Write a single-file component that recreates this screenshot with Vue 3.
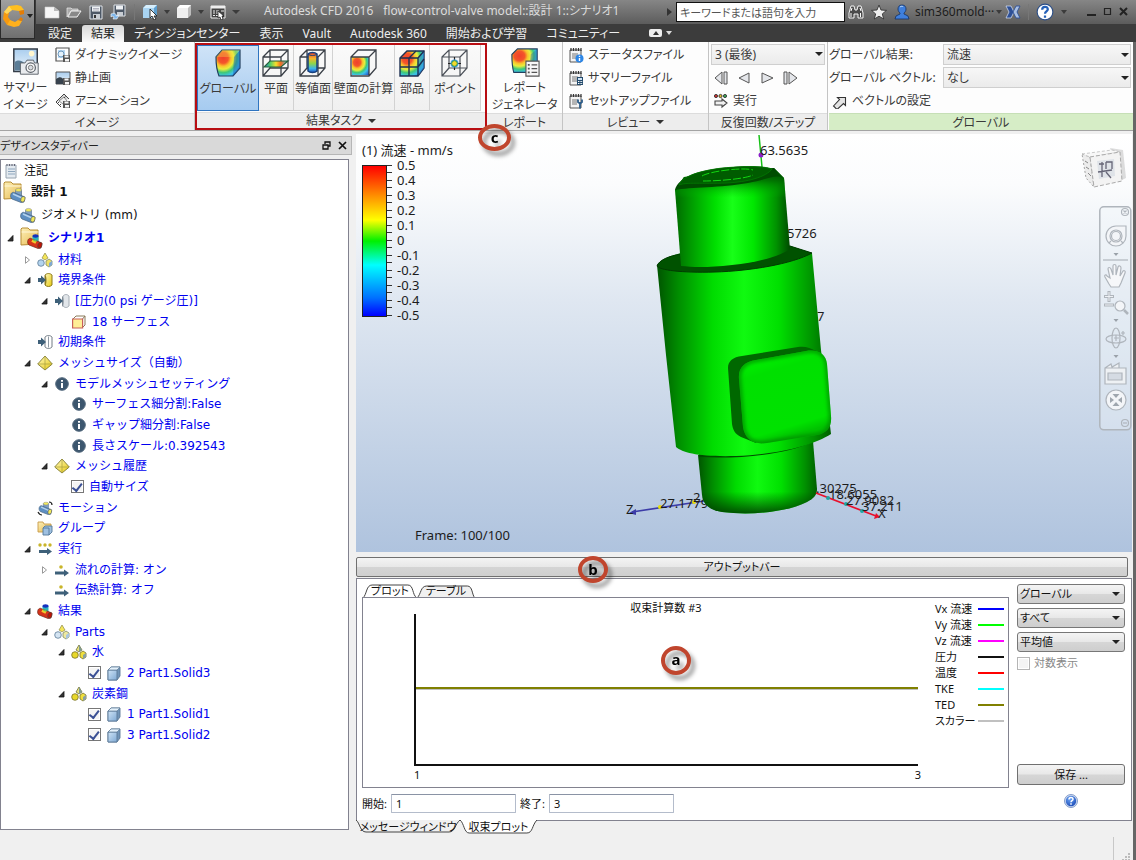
<script setup>
import { ref } from 'vue'

const menuTabs = ['設定', '結果', 'ディシジョンセンター', '表示', 'Vault', 'Autodesk 360', '開始および学習', 'コミュニティー']
const activeTab = ref('結果')

const imageTools = [
  { icon: 'dyn', label: 'ダイナミックイメージ' },
  { icon: 'still', label: '静止画' },
  { icon: 'anim', label: 'アニメーション' },
]
const resultTools = [
  { icon: 'gcube', label: 'グローバル', cls: 'w62', active: true },
  { icon: 'plane', label: '平面', cls: 'w35' },
  { icon: 'iso', label: '等値面', cls: 'w39' },
  { icon: 'wall', label: '壁面の計算', cls: 'w62' },
  { icon: 'parts', label: '部品', cls: 'w35' },
  { icon: 'point', label: 'ポイント', cls: 'w50' },
]
const reviewTools = [
  { icon: 'rstat', label: 'ステータスファイル' },
  { icon: 'rsum', label: 'サマリーファイル' },
  { icon: 'rset', label: 'セットアップファイル' },
]

const tree = [
  { lv: 0, icon: 'note', label: '注記', cls: 'black', noArrow: true },
  { lv: 0, icon: 'fgeo', label: '設計 1', cls: 'black bold', big: true, noArrow: true },
  { lv: 1, icon: 'geo', label: 'ジオメトリ (mm)', cls: 'black' },
  { lv: 1, arrow: 'open', icon: 'fscn', label: 'シナリオ1', cls: 'bold', big: true },
  { lv: 2, arrow: 'closed', icon: 'mat', label: '材料' },
  { lv: 2, arrow: 'open', icon: 'bc', label: '境界条件' },
  { lv: 3, arrow: 'open', icon: 'bcg', label: '[圧力(0 psi ゲージ圧)]' },
  { lv: 4, icon: 'surf', label: '18 サーフェス' },
  { lv: 2, icon: 'init', label: '初期条件' },
  { lv: 2, arrow: 'open', icon: 'mesh', label: 'メッシュサイズ（自動）' },
  { lv: 3, arrow: 'open', icon: 'info', label: 'モデルメッシュセッティング' },
  { lv: 4, icon: 'info', label: 'サーフェス細分割:False' },
  { lv: 4, icon: 'info', label: 'ギャップ細分割:False' },
  { lv: 4, icon: 'info', label: '長さスケール:0.392543' },
  { lv: 3, arrow: 'open', icon: 'mesh', label: 'メッシュ履歴' },
  { lv: 4, check: true, label: '自動サイズ' },
  { lv: 2, icon: 'motion', label: 'モーション' },
  { lv: 2, icon: 'group', label: 'グループ' },
  { lv: 2, arrow: 'open', icon: 'run3', label: '実行' },
  { lv: 3, arrow: 'closed', icon: 'run1', label: '流れの計算: オン' },
  { lv: 3, icon: 'run1', label: '伝熱計算: オフ' },
  { lv: 2, arrow: 'open', icon: 'res', label: '結果' },
  { lv: 3, arrow: 'open', icon: 'matw', label: 'Parts' },
  { lv: 4, arrow: 'open', icon: 'maty', label: '水' },
  { lv: 5, check: true, icon: 'solid', label: '2 Part1.Solid3' },
  { lv: 4, arrow: 'open', icon: 'maty', label: '炭素鋼' },
  { lv: 5, check: true, icon: 'solid', label: '1 Part1.Solid1' },
  { lv: 5, check: true, icon: 'solid', label: '3 Part1.Solid2' },
]
const indent = (r) => ({ paddingLeft: (r.noArrow ? 2 : 6 + 17 * (r.lv - 1)) + 'px' })

const scale = ['0.5', '0.4', '0.3', '0.2', '0.1', '0', '-0.1', '-0.2', '-0.3', '-0.4', '-0.5']

const series = [
  { label: 'Vx 流速', color: '#0000ff' },
  { label: 'Vy 流速', color: '#00ff00' },
  { label: 'Vz 流速', color: '#ff00ff' },
  { label: '圧力', color: '#111111' },
  { label: '温度', color: '#ff0000' },
  { label: 'TKE', color: '#00ffff' },
  { label: 'TED', color: '#808000' },
  { label: 'スカラー', color: '#c0c0c0' },
]
const start = ref('1')
const end = ref('3')
</script>

<template>
  <div class="app">
    <svg class="defs" aria-hidden="true">
      <defs>
        <radialGradient id="heat" cx=".3" cy=".3" r=".95">
          <stop offset="0" stop-color="#f0402c" /><stop offset=".22" stop-color="#f4552a" /><stop offset=".34" stop-color="#f9c22c" />
          <stop offset=".46" stop-color="#e8ee3c" /><stop offset=".6" stop-color="#3fc878" /><stop offset=".74" stop-color="#3cc4ea" /><stop offset="1" stop-color="#2456c8" />
        </radialGradient>
        <linearGradient id="heatH"><stop offset="0" stop-color="#2b6fd6" /><stop offset=".25" stop-color="#4fd06a" /><stop offset=".5" stop-color="#f6e02c" /><stop offset=".7" stop-color="#f26a22" /><stop offset="1" stop-color="#3cc4ea" /></linearGradient>
        <linearGradient id="heatV" x2="0" y2="1"><stop offset="0" stop-color="#e8402a" /><stop offset=".3" stop-color="#f6b52c" /><stop offset=".55" stop-color="#8fd64a" /><stop offset=".8" stop-color="#3cb4ea" /><stop offset="1" stop-color="#2456c8" /></linearGradient>
        <linearGradient id="sky" x2="0" y2="1"><stop offset="0" stop-color="#a9cdee" /><stop offset="1" stop-color="#eef6fc" /></linearGradient>
        <linearGradient id="blueC" x2="1" y2="1"><stop offset="0" stop-color="#cfe4f6" /><stop offset="1" stop-color="#7fa9d4" /></linearGradient>
        <linearGradient id="yel" x2="1" y2="1"><stop offset="0" stop-color="#fff9c0" /><stop offset="1" stop-color="#e6c80e" /></linearGradient>
        <linearGradient id="fold" x2="1" y2="1"><stop offset="0" stop-color="#fdf0b8" /><stop offset="1" stop-color="#e6b84e" /></linearGradient>
        <radialGradient id="qm" cx=".4" cy=".3" r=".8"><stop offset="0" stop-color="#6ba4f4" /><stop offset="1" stop-color="#1746b4" /></radialGradient>
      </defs>

      <symbol id="logo" viewBox="0 0 26 26"><path d="M16 2 8 3 3 9l3 2 5-4 7 1 5-1-3-4z" fill="#ffbf1f" /><path d="M3 9 2 16l4 6 4-4-3-4 1-4z" fill="#f79a10" /><path d="m6 22 7 2 5-1 3-5-4-1-3 2-5-2z" fill="#ffb01c" /><path d="m18 8 5-1 0 4-4 1zM21 18l-4-1 3-3 2 2z" fill="#e47c05" /><path d="m8 3 3 4-5 4-3-2z" fill="#ffd75a" /></symbol>
      <symbol id="new" viewBox="0 0 16 16"><path d="M1 3h9l5 4v7H1z" fill="#f6f6f6" stroke="#ccc" stroke-width=".6" /><path d="M10 3v4h5z" fill="#bbb" /></symbol>
      <symbol id="open" viewBox="0 0 16 16"><path d="M1 13V4h4l1 1h6v2H5z" fill="#aaa" stroke="#eee" stroke-width=".7" /><path d="m2 13 3-6h10l-4 6z" fill="#888" stroke="#f2f2f2" /></symbol>
      <symbol id="save" viewBox="0 0 16 16"><path d="M2 2h12v13H2z" fill="#4d5866" stroke="#dfe3e8" /><path d="M4 2.500h8v5H4z" fill="#eef1f4" /><path d="M5 10h7v5H5z" fill="#c9ced4" /><path d="M6 11h2v3H6z" fill="#333" /><path d="M5 4.500h6M5 6h6" stroke="#889" stroke-width=".6" /></symbol>
      <symbol id="saveas" viewBox="0 0 16 16"><path d="M4 1h11v11H4z" fill="#4d5866" stroke="#dfe3e8" /><path d="M6 1.500h7v4H6z" fill="#eef1f4" /><path d="M7 8h6v4H7z" fill="#c9ced4" /><path d="M1 10c3-2 6 0 5 2l3-1-2 4-4 0 1-2c-1-1-2-1-3 0z" fill="#7fb6ea" stroke="#fff" stroke-width=".6" /></symbol>
      <symbol id="selcube" viewBox="0 0 16 16"><path d="M1 4 4 1h11v10l-3 3H1z" fill="#5d9fd0" /><path d="M1 4h11v10H1z" fill="#a9d4f2" /><path d="M1 4 4 1h11l-3 3z" fill="#d7eefb" /><path d="M8 5v9l2-2 2 4 2-1-2-3h3z" fill="#fff" stroke="#222" stroke-width=".9" /></symbol>
      <symbol id="whcube" viewBox="0 0 16 16"><path d="M1 4 4 1h11v10l-3 3H1z" fill="#bdbdbd" /><path d="M1 4h11v10H1z" fill="#f0f0f0" /><path d="M1 4 4 1h11l-3 3z" fill="#fff" /></symbol>
      <symbol id="tbl" viewBox="0 0 16 16"><path d="M1 2h14v12H1z" fill="#444" stroke="#eee" /><path d="M1 2h14v2.500H1z" fill="#eee" /><path d="M3 7h2M3 9h2M3 11.500h2M6 7h3M6 9h2M6 11.500h2M11 7h3" stroke="#eee" stroke-width="1.200" /><path d="m8 7 0 7 2-1 1 3 2-1-1-3h2z" fill="#fff" stroke="#222" stroke-width=".8" /></symbol>
      <symbol id="bino" viewBox="0 0 16 16"><path d="M3 2h3l1 4h2l1-4h3l2 7v5h-5v-4H6v4H1V9z" fill="#4a4a4a" stroke="#f3f3f3" /><path d="M3 9v4M12.500 9v4M4 4l-1 3M12 4l1 3" stroke="#fff" /></symbol>
      <symbol id="star" viewBox="0 0 16 16"><path d="m8 1 2 5 5.500.4-4.200 3.500L12.700 15 8 12.200 3.300 15l1.400-5.100L.5 6.400 6 6z" fill="#eee" stroke="#333" stroke-width=".9" /></symbol>
      <symbol id="user" viewBox="0 0 16 16"><path d="M8 1c3 0 4 2 4 4s-1 3-2 4v1l4 2 1 3H1l1-3 4-2V9C5 8 4 7 4 5s1-4 4-4z" fill="#3f7fdc" stroke="#14305f" stroke-width=".8" /><path d="M6 3c1-1 3-1 3 0" stroke="#bcd8fb" fill="none" /></symbol>
      <symbol id="xch" viewBox="0 0 16 16"><path d="M1 2h5l3 6-3 6H1l3-6z" fill="#2d4f96" stroke="#dbe6fa" stroke-width=".7" /><path d="M15 2h-4L8 8l3 6h4l-3-6z" fill="#a9bfe2" stroke="#2d4f96" stroke-width=".9" /></symbol>
      <symbol id="help" viewBox="0 0 16 16"><circle cx="8" cy="8" r="7" fill="#fff" stroke="#2c4f88" stroke-width="1" /><path d="M5.500 6c0-3.500 5-3.300 5-.4C10.500 7.500 8 7.500 8 9.500M8 11v2" stroke="#2460b8" stroke-width="2" fill="none" /></symbol>
      <symbol id="helpb" viewBox="0 0 14 14"><circle cx="7" cy="7" r="6.500" fill="#cfdcf2" stroke="#6a86bd" stroke-width=".8" /><circle cx="7" cy="7" r="5.200" fill="url(#qm)" /><path d="M5 5.500c0-2.600 4-2.500 4-.3C9 6.700 7 6.600 7 8.200M7 9.300v1.500" stroke="#fff" stroke-width="1.500" fill="none" /></symbol>

      <symbol id="summary" viewBox="0 0 30 32"><path d="M2 2h25v24H2z" fill="url(#sky)" stroke="#333b46" stroke-width="1.600" /><circle cx="21" cy="7" r="3" fill="#fff6cf" /><path d="M3 16c4-3 8-1 10 1v8H3z" fill="#5b7d97" /><path d="M9 17h5l2-3h7l1 3h4v12H9z" fill="#e9ebee" stroke="#5a6068" /><circle cx="20" cy="22" r="5" fill="#fafafa" stroke="#5a6068" stroke-width="1.300" /><circle cx="20" cy="22" r="2.500" fill="#d8dce2" stroke="#777" /></symbol>
      <symbol id="dyn" viewBox="0 0 16 16"><path d="M1 1h13v7M1 1v13h7" fill="none" stroke="#555" stroke-width="1.200" /><path d="M3 3h7v8H3z" fill="#b9d9f3" /><circle cx="6" cy="7" r="3" fill="#e4f1fb" stroke="#6b97bd" /><path d="M8 8h7v7H8z" fill="#555" /><path d="M9.500 8.500h4v2h-4zM10 12h4v2.500h-4z" fill="#f5f5f5" /></symbol>
      <symbol id="still" viewBox="0 0 16 16"><path d="M1 2h14v12H1z" fill="url(#sky)" stroke="#555" /><path d="M1 9c4-3 6-2 8 1v4H1z" fill="#37424d" /><path d="M8 8h7v7H8z" fill="#555" /><path d="M9.500 8.500h4v2h-4zM10 12h4v2.500h-4z" fill="#f5f5f5" /></symbol>
      <symbol id="anim" viewBox="0 0 16 16"><path d="M1 9 9 1l5 5M1 9l5 5" fill="#d8d8d8" stroke="#444" /><path d="m4 8 5-4 3 4-4 3z" fill="#eee" stroke="#666" stroke-width=".7" /><path d="M2.500 10.500 4 9M4.500 12.500 6 11M10.500 3.500 9 5" stroke="#444" /><path d="M8 8h7v7H8z" fill="#555" /><path d="M9.500 8.500h4v2h-4zM10 12h4v2.500h-4z" fill="#f5f5f5" /></symbol>

      <symbol id="gcube" viewBox="0 0 30 30"><path d="M3 9 9 2h18v18l-7 8H6c-2-5-3-9-3-19z" fill="url(#heat)" stroke="#23405e" stroke-width="1.200" /><path d="m20 28 7-8V2l-6 7z" fill="#1c58b8" opacity=".45" /><path d="M3 9 9 2h18l-6 7z" fill="#f7e04a" opacity=".35" /></symbol>
      <symbol id="plane" viewBox="0 0 30 30"><path d="M2 9 9 2h18v18l-7 8H2zM2 9h18M20 9l7-7M20 9v19M9 2v18M9 20h18M9 20l-7 8" fill="none" stroke="#3b4048" stroke-width="1.300" /><path d="m3 19 6-6h18l-7 6z" fill="url(#heatH)" stroke="#25603a" stroke-width="1.100" /></symbol>
      <symbol id="iso" viewBox="0 0 30 30"><path d="M2 9 9 2h18v18l-7 8H2zM2 9h18M20 9l7-7M20 9v19M9 2v18M9 20h18M9 20l-7 8" fill="none" stroke="#3b4048" stroke-width="1.300" /><path d="M10 6c2-2 7-2 9 0v17c-2 2-7 2-9 0z" fill="url(#heatV)" stroke="#16407c" stroke-width="1.500" /><path d="M10 6c2 2 7 2 9 0" fill="none" stroke="#16407c" /></symbol>
      <symbol id="wall" viewBox="0 0 30 30"><path d="M3 9h17v18H3z" fill="url(#heat)" /><path d="M2 9 9 2h18v18l-7 8H2zM2 9h18M20 9l7-7M20 9v19" fill="none" stroke="#3b4048" stroke-width="1.300" /></symbol>
      <symbol id="parts" viewBox="0 0 30 30"><path d="m3 10 7-7h17v17l-6 8H3z" fill="url(#heat)" stroke="#1d2f52" stroke-width="1.400" /><path d="m21 10 6-7v17l-6 8z" fill="#2f8edc" opacity=".55" /><path d="M3 10h18v18M21 10l6-7M12 10v18M3 19h18l6-8M12 10l7-7" fill="none" stroke="#1d2f52" stroke-width="1.400" /></symbol>
      <symbol id="point" viewBox="0 0 30 30"><path d="M2 9 9 2h18v18l-7 8H2zM2 9h18M20 9l7-7M20 9v19M9 2v18M9 20h18M9 20l-7 8" fill="none" stroke="#4b5058" stroke-width="1.200" /><path d="M14.500 9v13M8 15.500h13" stroke="#222" stroke-width="1.200" /><circle cx="14.500" cy="15.500" r="4" fill="#3f9ee8" /><circle cx="14.500" cy="15.500" r="2.800" fill="#f6d92c" stroke="#3a9a4a" /></symbol>
      <symbol id="report" viewBox="0 0 32 32"><path d="M2 8 8 2h21v20l-8 5H4C2 20 2 16 2 8z" fill="url(#heat)" stroke="#23405e" stroke-width="1.200" /><path d="m21 27 8-5V2l-7 6z" fill="#1c58b8" opacity=".35" /><path d="M17 15h14v16H17z" fill="#f7f7f7" stroke="#555" stroke-width="1.200" /><path d="M19 18h2v2h-2zM19 22h2v2h-2zM19 26h2v2h-2z" fill="#555" /><path d="M23 19h6M23 23h6M23 27h6" stroke="#555" stroke-width="1.300" /></symbol>

      <symbol id="pad" viewBox="0 0 16 16"><path d="M2 3h11v12H2z" fill="#f4f4f4" stroke="#555" /><path d="M3 1v3M5.500 1v3M8 1v3M10.500 1v3M13 1v3" stroke="#333" stroke-width="1.200" /><path d="M4 7h6M4 9h5M4 11h5" stroke="#777" /></symbol>
      <symbol id="rstat" viewBox="0 0 16 16"><use href="#pad" /><circle cx="11.500" cy="11.500" r="4" fill="#2d86e6" /><path d="M11.500 8.800v1.300M11.500 11v3" stroke="#fff" stroke-width="1.400" /></symbol>
      <symbol id="rsum" viewBox="0 0 16 16"><use href="#pad" /><path d="M9 7h6v8H9z" fill="#234a6c" /><path d="M10 8h4v2h-4z" fill="#cfe4f6" /><path d="M10 11.500h1M11.600 11.500h1M13.200 11.500h1M10 13.500h1M11.600 13.500h1M13.200 13.500h1" stroke="#fff" /></symbol>
      <symbol id="rset" viewBox="0 0 16 16"><use href="#pad" /><path d="M12 15.500V10.500M10 6.500v2.500l2 1.500 2-1.500V6.500" fill="none" stroke="#2c5c88" stroke-width="1.800" /></symbol>
      <symbol id="run" viewBox="0 0 16 16"><circle cx="3" cy="3" r="1.600" fill="#c33" stroke="#222" stroke-width=".8" /><circle cx="7.500" cy="3" r="1.600" fill="#dcb82a" stroke="#222" stroke-width=".8" /><circle cx="12" cy="3" r="1.600" fill="#3ba65a" stroke="#222" stroke-width=".8" /><path d="M2 8h7V6l5 4-5 4v-2H2z" fill="#f0f0f0" stroke="#444" stroke-width="1.100" /></symbol>
      <symbol id="vec" viewBox="0 0 16 16"><path d="m1.500 13 6-6.500-2-2h8v8l-2-2-6.500 6z" fill="#e4e4e4" stroke="#333" stroke-width="1.100" /></symbol>
      <symbol id="first" viewBox="0 0 16 16"><path d="M9 2v12L2 8z M11 2h3v12h-3z" fill="#e4e6ea" stroke="#555" /></symbol>
      <symbol id="prev" viewBox="0 0 16 16"><path d="M13 3v10L3 8z" fill="#e4e6ea" stroke="#555" /></symbol>
      <symbol id="play" viewBox="0 0 16 16"><path d="M3 3v10l11-5z" fill="#e4e6ea" stroke="#555" /></symbol>
      <symbol id="last" viewBox="0 0 16 16"><path d="M7 2v12l8-6z M2 2h3v12H2z" fill="#e4e6ea" stroke="#555" /></symbol>

      <symbol id="note" viewBox="0 0 16 16"><path d="M3 2h10v13H3z" fill="#e4eaf0" stroke="#98a4b0" /><path d="M4 1v2M6.500 1v2M9 1v2M11.500 1v2" stroke="#667" /><path d="M5 6h7M5 8.500h7M5 11h7" stroke="#8ea6bd" /></symbol>
      <symbol id="geo" viewBox="0 0 16 16"><path d="M5.500 3h6v6h-6z" fill="#7e9fc4" stroke="#4d6f94" stroke-width=".6" /><ellipse cx="8.500" cy="3" rx="3" ry="1.600" fill="#f2ea5c" stroke="#888" stroke-width=".5" /><path d="M.8 7.500C1.500 5 4 4.800 5 6l10 4-1 5-3 .5L2 12C.8 11 .3 9.500.8 7.500z" fill="#5e8fc2" stroke="#45617f" stroke-width=".7" /><path d="m3 7 9 4" stroke="#b5d2ec" stroke-width="1.400" /><ellipse cx="13" cy="12.300" rx="2" ry="2.900" transform="rotate(20 13 12)" fill="#f2ea5c" stroke="#555" stroke-width=".6" /></symbol>
      <symbol id="res" viewBox="0 0 16 16"><path d="M5.500 3h6v6h-6z" fill="#2bb3be" /><ellipse cx="8.500" cy="3" rx="3" ry="1.700" fill="#152fc0" /><path d="M.8 7.500C1.500 5 4 4.800 5 6l10 4-1 5-3 .5L2 12C.8 11 .3 9.500.8 7.500z" fill="#d6331a" stroke="#6f2d20" stroke-width=".7" /><path d="m5 7.500 4 2" stroke="#f5c62a" stroke-width="3" /><path d="m6.500 7 3 1" stroke="#5cc85a" stroke-width="1.600" /><ellipse cx="13" cy="12.300" rx="2" ry="2.900" transform="rotate(20 13 12)" fill="#c21505" stroke="#444" stroke-width=".6" /></symbol>
      <symbol id="folder" viewBox="0 0 23 22"><path d="M1 18V2l1-1h6l2 2h8v14z" fill="url(#fold)" stroke="#b78d35" /><path d="M1.500 5h17" stroke="#fff6d6" /></symbol>
      <symbol id="fgeo" viewBox="0 0 23 22"><use href="#folder" width="23" height="22" /><use href="#geo" x="7" y="6" width="16" height="16" /></symbol>
      <symbol id="fscn" viewBox="0 0 23 22"><use href="#folder" width="23" height="22" /><use href="#res" x="7" y="6" width="16" height="16" /></symbol>
      <symbol id="mat" viewBox="0 0 16 16"><path d="m8 1 3 5-3 2-3-2z" fill="#f4e558" stroke="#8d8a4a" stroke-width=".7" /><circle cx="4" cy="11" r="3.300" fill="#b4d4ee" stroke="#5c7a96" stroke-width=".8" /><path d="m12 7 3 2v4l-3 2-3-2V9z" fill="#eee068" stroke="#7c8a6a" stroke-width=".8" /><path d="m12 11 3-2v4l-3 2z" fill="#7fa9d4" /></symbol>
      <symbol id="matw" viewBox="0 0 16 16"><path d="m8 1 3 5-3 2-3-2z" fill="#f4e558" stroke="#8d8a4a" stroke-width=".7" /><circle cx="4" cy="11" r="3.300" fill="#d4e4f2" stroke="#5c7a96" stroke-width=".8" /><path d="m12 7 3 2v4l-3 2-3-2V9z" fill="#eee9a0" stroke="#7c8a6a" stroke-width=".8" /><path d="m12 11 3-2v4l-3 2z" fill="#a9c6e2" /></symbol>
      <symbol id="maty" viewBox="0 0 16 16"><path d="m8 1 3 5-3 2-3-2z" fill="#e9e27a" stroke="#6d6d3a" stroke-width=".8" /><path d="m8 1 3 5-3 2z" fill="#7f9a94" /><circle cx="4" cy="11" r="3.300" fill="#e8d82a" stroke="#76702a" stroke-width=".8" /><path d="m12 7 3 2v4l-3 2-3-2V9z" fill="#f0e03c" stroke="#76702a" stroke-width=".8" /><path d="m12 11 3-2v4l-3 2z" fill="#8aa0a0" /></symbol>
      <symbol id="bc" viewBox="0 0 16 16"><path d="M8 3c2-2 5-2 7 0v10c-2 2-5 2-7 0z" fill="url(#yel)" stroke="#8c7a1c" /><path d="M8 3c2 1 2 9 0 11" fill="#8c7a1c" /><path d="M1 6h3V3.500L9 8l-5 4.500V10H1z" fill="#3e6079" /></symbol>
      <symbol id="bcg" viewBox="0 0 16 16"><path d="M9 3c2-2 4-2 6 0v10c-2 2-4 2-6 0z" fill="#e2e6ea" stroke="#a4acb4" /><path d="M8 3c2 1 2 9 0 11" fill="#7f8a94" /><path d="M1 6h3V3.500L9 8l-5 4.500V10H1z" fill="#3e6079" /></symbol>
      <symbol id="init" viewBox="0 0 16 16"><path d="M8 3c2-2 5-2 7 0v10c-2 2-5 2-7 0z" fill="#fff" stroke="#707a84" /><path d="M11.500 2.500v11" stroke="#909aa4" /><path d="M1 6h3V3.500L9 8l-5 4.500V10H1z" fill="#3e6079" /></symbol>
      <symbol id="surf" viewBox="0 0 16 16"><path d="m2 5 3-3h9v9l-3 3" fill="#fff" stroke="#8a7a5a" /><path d="M11.500 5 14 2" stroke="#8a7a5a" /><path d="M1.600 5h10v9h-10z" fill="#ffee96" stroke="#c8605a" stroke-width="1.200" /></symbol>
      <symbol id="mesh" viewBox="0 0 16 16"><path d="m8 1 7.300 8L8 15 .7 9z" fill="url(#yel)" stroke="#7f7a32" stroke-width=".9" /><path d="M8 1v14M1 9h14" stroke="#a89f40" stroke-width=".7" /></symbol>
      <symbol id="info" viewBox="0 0 16 16"><circle cx="8" cy="8" r="6.300" fill="#3c566e" stroke="#52687c" /><path d="M8 4v1.800M8 7v5" stroke="#fff" stroke-width="2" /></symbol>
      <symbol id="motion" viewBox="0 0 16 16"><use href="#geo" x="1" y="1" width="15" height="14" /><path d="M12 2c2 0 3 1 3 3M1 12c1 2 2 3 4 3" fill="none" stroke="#222" stroke-width="1.200" /></symbol>
      <symbol id="group" viewBox="0 0 16 16"><path d="M1 12V2h5l1 2h7v8z" fill="url(#fold)" stroke="#c79a48" stroke-width=".9" /><path d="M6 8h6v7H6zM6 8l2-2h7v6l-3 3" fill="#9fc0e0" stroke="#54789a" stroke-width=".9" /></symbol>
      <symbol id="run3" viewBox="0 0 16 16"><circle cx="3" cy="4" r="1.700" fill="#c9b52a" /><circle cx="8" cy="4" r="1.700" fill="#c9b52a" /><circle cx="13" cy="4" r="1.700" fill="#c9b52a" /><path d="M2 9h8V7l5 3.500-5 3.500V12H2z" fill="#3e6079" /></symbol>
      <symbol id="run1" viewBox="0 0 16 16"><circle cx="7" cy="5" r="1.800" fill="#c9b52a" /><path d="M1 9.500h9v-2l5 3.500-5 3.500v-2H1z" fill="#3e6079" /></symbol>
      <symbol id="solid" viewBox="0 0 16 16"><path d="m2 5 3-3h9v9l-3 4H2z" fill="#7195b8" stroke="#5b7896" stroke-width=".9" /><path d="M2 5h9v10H2z" fill="url(#blueC)" stroke="#5b7896" stroke-width=".9" /><path d="m2 5 3-3h9l-3 3z" fill="#e4f1fb" stroke="#5b7896" stroke-width=".7" /></symbol>
    </svg>

    <header class="top">
      <button class="logo" aria-label="アプリケーション"><svg class="i26"><use href="#logo" /></svg><i class="tri light"></i></button>
      <div class="title">
        <div class="qat">
          <button v-for="n in ['new', 'open', 'save', 'saveas']" :key="n" :aria-label="n"><svg class="i16"><use :href="'#' + n" /></svg></button>
          <i class="vsep"></i>
          <button aria-label="選択"><svg class="i16"><use href="#selcube" /></svg></button><i class="tri dim"></i>
          <button aria-label="表示スタイル"><svg class="i16"><use href="#whcube" /></svg></button><i class="tri dim"></i>
          <button aria-label="テーブル"><svg class="i16"><use href="#tbl" /></svg></button><i class="tri dim wide"></i>
        </div>
        <div class="caption"><span>Autodesk CFD 2016</span><span>flow-control-valve model::設計 1::シナリオ1</span></div>
        <i class="rtri"></i>
        <input class="search" type="text" placeholder="キーワードまたは語句を入力" aria-label="検索">
        <div class="account">
          <svg class="i16"><use href="#bino" /></svg>
          <svg class="i16"><use href="#star" /></svg>
          <svg class="i16"><use href="#user" /></svg>
          <span class="uname">sim360mold···</span><i class="tri dim"></i>
        </div>
        <div class="apps">
          <svg class="i16"><use href="#xch" /></svg><i class="vsep"></i>
          <svg class="i18"><use href="#help" /></svg><i class="tri dim"></i>
        </div>
        <div class="winbtns">
          <button aria-label="最小化"><svg viewBox="0 0 10 10"><path d="M0 8h9" stroke="#222" stroke-width="2" /></svg></button>
          <button aria-label="最大化"><svg viewBox="0 0 10 10"><path d="M1.500 1.500h6v6h-6z" stroke="#222" fill="none" stroke-width="1.200" /></svg></button>
          <button aria-label="閉じる"><svg viewBox="0 0 10 10"><path d="m1 1 7 7M8 1 1 8" stroke="#222" stroke-width="2" /></svg></button>
        </div>
      </div>
      <nav class="tabs">
        <button v-for="t in menuTabs" :key="t" :class="{ on: t === activeTab }" @click="activeTab = t">{{ t }}</button>
        <span class="mini"><i></i></span><i class="tri white"></i>
      </nav>
    </header>

    <div class="client">
      <section class="ribbon">
        <div class="grp g-img">
          <div class="body">
            <button class="big"><svg class="i30"><use href="#summary" /></svg><span>サマリー<br>イメージ</span></button>
            <div class="list">
              <button v-for="t in imageTools" :key="t.label"><svg class="i16"><use :href="'#' + t.icon" /></svg>{{ t.label }}</button>
            </div>
          </div>
          <div class="cap">イメージ</div>
        </div>
        <div class="grp g-res">
          <div class="body">
            <button v-for="t in resultTools" :key="t.label" class="tool" :class="[t.cls, { active: t.active }]"><svg class="i30"><use :href="'#' + t.icon" /></svg><span>{{ t.label }}</span></button>
          </div>
          <div class="cap">結果タスク<i class="tri dark"></i></div>
          <span class="callout c">c</span>
        </div>
        <div class="grp g-rep">
          <div class="body"><button class="big"><svg class="i30"><use href="#report" /></svg><span>レポート<br>ジェネレータ</span></button></div>
          <div class="cap">レポート</div>
        </div>
        <div class="grp g-rev">
          <div class="body"><div class="list">
            <button v-for="t in reviewTools" :key="t.label"><svg class="i16"><use :href="'#' + t.icon" /></svg>{{ t.label }}</button>
          </div></div>
          <div class="cap">レビュー<i class="tri dark"></i></div>
        </div>
        <div class="grp g-iter">
          <div class="body"><div class="list">
            <span class="sel"><select aria-label="ステップ"><option>3 (最後)</option></select></span>
            <div class="player">
              <button v-for="n in ['first', 'prev', 'play', 'last']" :key="n" :aria-label="n"><svg class="i16"><use :href="'#' + n" /></svg></button>
            </div>
            <button><svg class="i16"><use href="#run" /></svg>実行</button>
          </div></div>
          <div class="cap">反復回数/ステップ</div>
        </div>
        <div class="grp g-glob">
          <div class="body"><div class="list">
            <div class="field"><label for="gr">グローバル結果:</label><span class="sel"><select id="gr"><option>流速</option></select></span></div>
            <div class="field"><label for="gv">グローバル ベクトル:</label><span class="sel"><select id="gv"><option>なし</option></select></span></div>
            <button class="vecbtn"><svg class="i16"><use href="#vec" /></svg>ベクトルの設定</button>
          </div></div>
          <div class="cap green">グローバル</div>
        </div>
      </section>

      <main class="work">
        <aside class="side">
          <div class="sidehead">
            <span>デザインスタディバー</span>
            <button aria-label="フロート"><svg viewBox="0 0 9 9"><path d="M3 3V1h5v4H6M1 4h5v4H1z" fill="none" stroke="#111" stroke-width="1.300" /></svg></button>
            <button aria-label="閉じる"><svg viewBox="0 0 9 9"><path d="m1 1 7 7M8 1 1 8" stroke="#111" stroke-width="1.700" /></svg></button>
          </div>
          <ul class="tree">
            <li v-for="(r, i) in tree" :key="i" :class="r.cls" :style="indent(r)">
              <span v-if="!r.noArrow" class="arr"><svg v-if="r.arrow" viewBox="0 0 8 8"><path v-if="r.arrow === 'open'" d="M6 1.500V7H.8z" fill="#333" stroke="#111" stroke-width=".8" /><path v-else d="M1.500.7v6.600L5.500 4z" fill="#fff" stroke="#999" /></svg></span>
              <input v-if="r.check" type="checkbox" checked :id="'t' + i">
              <svg v-if="r.icon" :class="r.big ? 'ibig' : 'i16'"><use :href="'#' + r.icon" /></svg>
              <label :for="r.check ? 't' + i : null">{{ r.label }}</label>
            </li>
          </ul>
        </aside>

        <div class="right">
          <section class="view">
            <svg class="scene" viewBox="356 134 776 418" width="776" height="418">
              <defs>
                <linearGradient id="c1"><stop offset="0" stop-color="#006a00" /><stop offset=".12" stop-color="#009400" /><stop offset=".35" stop-color="#00e000" /><stop offset=".5" stop-color="#18ff18" /><stop offset=".68" stop-color="#00e800" /><stop offset=".88" stop-color="#009200" /><stop offset="1" stop-color="#004a00" /></linearGradient>
                <linearGradient id="c2"><stop offset="0" stop-color="#005400" /><stop offset=".12" stop-color="#008c00" /><stop offset=".32" stop-color="#00dc00" /><stop offset=".5" stop-color="#10fa10" /><stop offset=".7" stop-color="#00e000" /><stop offset=".9" stop-color="#009000" /><stop offset="1" stop-color="#006000" /></linearGradient>
                <linearGradient id="c3" x2="0" y2="1"><stop offset=".7" stop-color="#003c00" stop-opacity="0" /><stop offset="1" stop-color="#003800" stop-opacity=".85" /></linearGradient>
                <linearGradient id="c4" x2="0" y2="1"><stop offset="0" stop-color="#003c00" /><stop offset=".13" stop-color="#006a00" stop-opacity=".8" /><stop offset=".3" stop-color="#00c000" stop-opacity="0" /></linearGradient>
                <linearGradient id="c5" x2=".3" y2="1"><stop offset="0" stop-color="#00c800" /><stop offset=".15" stop-color="#00f000" /><stop offset=".3" stop-color="#00e000" /><stop offset=".9" stop-color="#00e200" /><stop offset="1" stop-color="#00c400" /></linearGradient>
                <filter id="soft" x="-10%" y="-10%" width="120%" height="120%"><feGaussianBlur stdDeviation="2" /></filter>
                <clipPath id="boxc"><path d="M756 360 806 351c12-2 20 3 21 13l4 52c1 11-4 17-14 19l-50 8c-14 2-22-4-24-16l-4-48c-1-11 5-17 17-19z" /></clipPath>
              </defs>
              <path d="M632 512 704 501" stroke="#3c3ca8" stroke-width="1.700" /><path d="m629 513 7-4v6z" fill="#3c3ca8" /><circle cx="660" cy="507" r="2" fill="#e6e000" /><circle cx="694" cy="502" r="2" fill="#e6e000" />
              <g class="lbl"><text x="787" y="238">5726</text><text x="817" y="321">7</text><text x="693" y="502">2</text><text x="660" y="508">27.1779</text></g>
              <path d="M759 135l3 32" stroke="#16c016" stroke-width="1.500" /><circle cx="761" cy="155" r="2.500" fill="#8a1fc8" />
              <text class="lbl" x="760" y="155">63.5635</text>
              <path d="M698 455l4 40c1 10 8 15 20 17 32 4 68-1 85-10 7-4 10-7 10-13l-4-48z" fill="url(#c2)" />
              <path d="M698 455l4 40c1 10 8 15 20 17 32 4 68-1 85-10 7-4 10-7 10-13l-4-48z" fill="url(#c3)" />
              <path d="M699 452l0 5c40 2 85-2 114-15v-5z" fill="#004c00" />
              <path d="M657 265c5-6 13-9 24-12l109-7 22 7 9 97 10 84c-18 12-58 21-95 22-36 1-53-3-60-9l-10-92z" fill="url(#c2)" />
              <path d="M657 266c2-6 12-10 24-12l109-8 22 7c-20 11-62 18-97 19-34 1-56-2-58-6z" fill="#005200" stroke="#003c00" />
              <path d="M675 190l9-13 90-9 10 10 6 71c-12 8-32 13-58 16-26 3-40 2-51 1z" fill="url(#c1)" />
              <path d="M675 190l9-13 90-9 10 10 6 71c-12 8-32 13-58 16-26 3-40 2-51 1z" fill="url(#c4)" />
              <path d="M675 190c3-12 20-19 47-22 25-3 43-2 50 1l11 9c-7-4-15 1-35 5-27 5-58 4-73 7z" fill="#004c00" />
              <path d="M679 185c4-9 20-14 43-17 24-2 42-2 50 1-6 8-24 13-46 14-24 1-40-1-47 2z" fill="#005c00" stroke="#007a00" stroke-width=".8" />
              <path d="M702 176c8-5 42-9 51-6M703 181c15 0 42-2 50-6" fill="none" stroke="#12d812" stroke-dasharray="8 2" />
              <path d="M742 356 798 347c8-1 12 1 18 4l-60 92-15-6c-6-3-8-7-9-13l-4-56c0-7 5-11 14-12z" fill="#006800" />
              <path d="M756 360 806 351c12-2 20 3 21 13l4 52c1 11-4 17-14 19l-50 8c-14 2-22-4-24-16l-4-48c-1-11 5-17 17-19z" fill="url(#c5)" />
              <g clip-path="url(#boxc)"><path d="M756 360 806 351c12-2 20 3 21 13l4 52c1 11-4 17-14 19l-50 8c-14 2-22-4-24-16l-4-48c-1-11 5-17 17-19z" fill="none" stroke="#007a00" stroke-width="3" filter="url(#soft)" /></g>
              <path d="M816 493 876 516" stroke="#e8102c" stroke-width="1.700" /><path d="m880 517-6 2 2-6z" fill="#e8102c" /><circle cx="828" cy="498" r="2" fill="#1fa6a6" /><circle cx="846" cy="504" r="2" fill="#1fa6a6" /><circle cx="862" cy="511" r="2" fill="#1fa6a6" />
              <g class="lbl"><text x="816" y="493">.30275</text><text x="829" y="499">18.6055</text><text x="846" y="505">27.9082</text><text x="862" y="511">37.211</text><text x="878" y="518">X</text><text x="626" y="514">Z</text></g>
              <text class="lbl" x="415" y="540">Frame: 100/100</text>
            </svg>
            <div class="scale">
              <div class="scaletitle">(1) 流速 - mm/s</div>
              <div class="scalebody"><i class="ramp"></i><i class="ticks"></i><ul><li v-for="s in scale" :key="s">{{ s }}</li></ul></div>
            </div>
            <svg class="cube" viewBox="0 0 46 46"><path d="m30 4 13 2 3 28-6 3z" fill="#aaa" opacity=".4" /><path d="m2 10 8 3 4 30-8-9z" fill="#ececec" stroke="#999" stroke-dasharray="2 2" stroke-width=".9" /><path d="m2 10 30-4 8 2-30 5z" fill="#f8f8f8" stroke="#bbb" stroke-width=".8" stroke-dasharray="3 2" /><path d="m10 13 30-5 2 29-28 6z" fill="#f3f3f3" stroke="#aaa" stroke-dasharray="4 2" /><path d="m17 17 17-2 1 17-16 3z" fill="#dfe3e8" /><path d="M19 20h5M22 18v15M18 28l14-2M26 18h6v7M26 18v7M26 28l5 6" stroke="#667" stroke-width="1.300" fill="none" /><path d="m5 17 3 2M6 23l3 2M8 29l3 3" stroke="#888" /></svg>
            <svg class="nav" viewBox="0 0 33 225">
              <g fill="none" stroke="#afb5bc" stroke-width="1.200">
                <rect x=".8" y=".8" width="31" height="223" rx="4" fill="#f2f5f9" fill-opacity=".35" stroke-width="1.500" />
                <circle cx="26" cy="6" r="3.500" /><path d="m24.500 4.500 3 3M27.500 4.500l-3 3" />
                <path d="M17 20h10v10a10 10 0 1 1-10-10z" fill="#f3f5f8" /><circle cx="17" cy="30" r="6" /><circle cx="17" cy="30" r="4.500" /><path d="m12 35-2 2M22 35l2 2" />
                <path d="M4 54h25" />
                <path d="M10 78 6 71c-1-2 1-3 2-1l3 2-2-9c0-2 2-2 3 0l2 6v-9c0-2 3-2 3 0v9l2-8c1-2 3-1 3 1l-1 8 3-5c1-1 3 0 2 2l-4 10-2 4h-8z" fill="#f6f7f9" />
                <path d="M10 85v11M5 90.500h10M5 99h10" stroke-width="3" /><path d="M10 86v9M6 90.500h8M6 99h8" stroke="#eef1f5" stroke-width="1" /><circle cx="21" cy="100" r="5" fill="#f3f5f8" /><path d="m25 104 4 4" stroke-width="2.500" />
                <ellipse cx="17" cy="132" rx="4" ry="10" /><ellipse cx="17" cy="133" rx="10" ry="4" /><path d="M15 132h5M17 129v6M24 125v4M22 127h4" />
                <path d="M6 162h21v16H6zM6 162l6-4 1 3 7-4v5" fill="#eef1f4" /><path d="M9 167h14v7H9z" fill="#d5dbe3" />
                <circle cx="17" cy="194" r="10" fill="#f3f5f8" /><path d="m11 191 0 6 4-3zM23 191v6l-4-3zM13.500 188h7L17 192zM13.500 200h7L17 196z" fill="#9fa6ae" stroke="none" />
                <circle cx="26" cy="217" r="3.500" /><path d="M24 217h4" />
              </g>
              <path d="M14.500 47h5L17 50zM14.500 113h5L17 116zM14.500 149h5L17 152z" fill="#9aa1a9" />
            </svg>
          </section>

          <div class="outwrap"><button class="outbtn">アウトプットバー</button><span class="callout b">b</span></div>

          <section class="output">
            <div class="plotcol">
              <div class="ptabs">
                <button class="pt on"><svg viewBox="0 0 53 14" preserveAspectRatio="none"><path d="M0 14C4 10 3 1 9 1H44c6 0 4 10 9 13z" /></svg><span>プロット</span></button>
                <button class="pt"><svg viewBox="0 0 53 14" preserveAspectRatio="none"><path d="M0 14C4 10 3 2 9 2H46c5 0 4 9 7 12z" /></svg><span>テーブル</span></button>
              </div>
              <div class="frame">
                <div class="plot">
                  <div class="ptitle">収束計算数 #3</div>
                  <div class="axes"><i class="flat"></i></div>
                  <div class="xt"><span>1</span><span>3</span></div>
                </div>
                <ul class="legend"><li v-for="s in series" :key="s.label"><span>{{ s.label }}</span><i :style="{ background: s.color }"></i></li></ul>
                <span class="callout a">a</span>
              </div>
              <div class="range">
                <label for="st">開始:</label><input id="st" v-model="start" type="text">
                <label for="en">終了:</label><input id="en" v-model="end" type="text">
              </div>
            </div>
            <div class="opts">
              <span class="sel3"><select aria-label="範囲"><option>グローバル</option></select></span>
              <span class="sel3"><select aria-label="変数"><option>すべて</option></select></span>
              <span class="sel3"><select aria-label="統計"><option>平均値</option></select></span>
              <div class="log"><input id="lg" type="checkbox" disabled><label for="lg">対数表示</label></div>
              <button class="savebtn">保存 ...</button>
              <button class="hb" aria-label="ヘルプ"><svg class="i14"><use href="#helpb" /></svg></button>
            </div>
          </section>
          <div class="btabs">
            <button class="bt w104"><svg viewBox="0 0 104 14" preserveAspectRatio="none"><path d="M0 0c4 3 4 12 10 12H93c6 0 6-8 11-12" /></svg><span>メッセージウィンドウ</span></button>
            <button class="bt w76 on"><svg viewBox="0 0 76 14" preserveAspectRatio="none"><path d="M0 0c4 3 4 13 9 13H66c6 0 5-8 10-13" /></svg><span>収束プロット</span></button>
          </div>
        </div>
      </main>
      <footer class="status"><i class="ssep"></i><svg viewBox="0 0 10 10"><path d="M8 2h2M5 5h2M8 5h2M2 8h2M5 8h2M8 8h2" stroke="#bbb" stroke-width="2" /></svg></footer>
    </div>
  </div>
</template>

<style>
html, body { margin: 0; background: #f0f0f0; }
</style>

<style scoped>
.app {
  --ui: "Noto Sans", "Noto Sans CJK JP", sans-serif;
  --tree: "DejaVu Sans", "Noto Sans CJK JP", sans-serif;
  display: flex; flex-direction: column; min-height: 100vh;
  font: 12px/16px var(--ui); color: #3a3a3a; font-feature-settings: "palt";
}
.app * { box-sizing: border-box; }
.defs { position: absolute; width: 0; height: 0; }
button { border: 0; background: none; padding: 0; margin: 0; font: inherit; color: inherit; font-feature-settings: inherit; cursor: pointer; white-space: nowrap; }
input, select { font: inherit; color: inherit; font-feature-settings: inherit; margin: 0; }
svg { display: block; flex: none; }
ul { list-style: none; margin: 0; padding: 0; }
.i14 { width: 14px; height: 14px; } .i16 { width: 16px; height: 16px; } .i18 { width: 18px; height: 18px; }
.i26 { width: 26px; height: 26px; } .i30 { width: 30px; height: 30px; } .ibig { width: 23px; height: 22px; }
.tri { width: 0; height: 0; border: 3px solid transparent; border-top: 4px solid #333; border-bottom: 0; flex: none; }
.tri.light { border-top-color: #222; } .tri.dim { border-top-color: #3b3b3b; } .tri.white { border-top-color: #ddd; }
.tri.wide { border-left-width: 4px; border-right-width: 4px; }
.tri.dark { border-left-width: 4px; border-right-width: 4px; margin-left: 6px; }

.top { display: grid; grid-template-columns: 36px 1fr; grid-template-rows: 24px 18px; background: #3c3c3c; height: 42px; }
.logo { grid-row: 1 / 3; width: 35px; height: 39px; display: flex; align-items: center; background: linear-gradient(#a0a0a0, #6f6f6f); border: 1px solid #2a2a2a; border-top: 0; padding: 0 1px 6px 0; }
.title { display: flex; align-items: center; background: linear-gradient(#868686, #5c5c5c); color: #dcdcdc; }
.qat { display: flex; align-items: center; gap: 6px; padding-left: 8px; width: 228px; }
.qat .vsep { margin: 0 1px 0 2px; }
.vsep { width: 1px; height: 16px; background: #777; }
.caption { display: flex; gap: 10px; flex: 1; white-space: nowrap; padding-bottom: 2px; }
.rtri { border: 4px solid transparent; border-left: 5px solid #333; border-right: 0; margin-right: 4px; }
.search { width: 169px; height: 20px; border: 1px solid #111; background: #fff; padding: 0 3px; color: #555; border-radius: 0; font-size: 11px; }
.search::placeholder { color: #555; opacity: 1; }
.account { display: flex; align-items: center; gap: 7px; padding-left: 3px; width: 160px; color: #1c1c1c; }
.uname { width: 77px; margin-left: -2px; }
.uname + .tri { margin-left: -3px; }
.apps { display: flex; align-items: center; gap: 7px; width: 66px; }
.winbtns { display: flex; gap: 6px; width: 49px; margin-left: 16px; }
.winbtns svg { width: 10px; height: 10px; }
.tabs { display: flex; align-items: stretch; padding: 0 0 0 3px; gap: 1px; color: #eee; }
.tabs button { padding: 0 9px; line-height: 17px; }
.tabs button.on { background: linear-gradient(#d8d8d8, #fafafa); color: #222; border-radius: 3px 3px 0 0; margin-top: 1px; line-height: 16px; }
.mini { width: 13px; height: 8px; background: #eee; border-radius: 2px; align-self: center; margin-left: 19px; display: flex; align-items: center; justify-content: center; }
.mini i { border: 3px solid transparent; border-bottom: 4px solid #333; border-top: 0; }
.mini + .tri { align-self: center; margin-left: 3px; }

.client { flex: 1; display: flex; flex-direction: column; border-right: 3px solid #666; background: #f0f0f0; }
.ribbon { display: flex; background: #fdfdfd; border-bottom: 1px solid #a4a4a4; height: 89px; }
.grp { display: flex; flex-direction: column; border-right: 1px solid #c4c4c4; flex: none; }
.body { flex: 1; display: flex; }
.cap { height: 17px; line-height: 17px; background: #ededed; border-top: 1px solid #dcdcdc; display: flex; justify-content: center; align-items: center; }
.cap.green { background: #d6edc6; border-color: #c6dfb6; }
.big { display: flex; flex-direction: column; align-items: center; line-height: 17px; padding-top: 5px; gap: 2px; text-align: center; }
.list { display: flex; flex-direction: column; padding-top: 1px; flex: 1; }
.list > button, .player { display: flex; align-items: center; gap: 4px; height: 23px; }
.g-img { width: 195px; } .g-img .big { width: 51px; } .g-img .list { padding-left: 4px; }
.g-res { width: 292px; border: 2px solid #b80d12; margin-top: 1px; position: relative; }
.g-res .cap { height: 16px; }
.tool { display: flex; flex-direction: column; align-items: center; gap: 3px; padding-top: 3px; border-right: 1px solid #d2d2d2; border-bottom: 1px solid #d2d2d2; background: linear-gradient(#fafafa, #f0f0f0); margin-bottom: 1px; }
.tool.active { background: linear-gradient(#cfe3f7, #a6cbf0); border: 1px solid #2f74c0; padding-top: 2px; }
.w62 { width: 62px; } .w35 { width: 35px; } .w39 { width: 39px; } .w50 { width: 51px; }
.g-rep { width: 76px; } .g-rep .big { width: 75px; }
.g-rev { width: 146px; } .g-rev .list { padding-left: 5px; }
.g-iter { width: 119px; } .g-iter .list { padding-left: 2px; padding-right: 2px; } .g-iter .list > button { padding-left: 2px; }
.player { gap: 7px; padding-left: 2px; }
.g-glob { flex: 1; border-right: 0; padding-left: 1px; } .g-glob .list { padding-right: 2px; }
.field { display: flex; height: 23px; align-items: center; } .field label { width: 114px; }
.field .sel { flex: 1; }
.vecbtn { padding-left: 3px; }
.sel, .sel3 { position: relative; display: block; }
.sel select { appearance: none; width: 100%; height: 21px; border: 1px solid #cfcfcf; background: linear-gradient(#f7f7f7, #ebebeb); padding: 0 3px; display: block; border-radius: 0; }
.g-iter .sel { height: 23px; padding-top: 1px; }
.sel::after, .sel3::after { content: ""; position: absolute; right: 2px; top: 9px; border: 4px solid transparent; border-top: 4px solid #222; border-bottom: 0; pointer-events: none; }

.callout { position: absolute; width: 30px; height: 28px; border: 4px solid #c0452d; border-radius: 50%; color: #000; font: bold 15px/18px var(--ui); text-align: center; filter: drop-shadow(4px 5px 2px rgba(0, 0, 0, .4)); z-index: 2; pointer-events: none; }
.callout.c { right: -26px; bottom: -23px; width: 33px; height: 27px; }
.callout.b { left: 222px; top: -1px; height: 27px; }
.callout.a { left: 298px; top: 48px; line-height: 19px; height: 29px; }

.work { display: flex; gap: 4px; flex: 1; }
.side { width: 352px; padding: 5px 0 4px; flex: none; display: flex; flex-direction: column; }
.sidehead { display: flex; align-items: center; height: 19px; background: #d9d9d9; border: 1px solid #b6b6b6; border-left: 0; font-size: 11px; color: #222; gap: 6px; padding-right: 3px; margin-bottom: 4px; }
.sidehead span { flex: 1; }
.sidehead button { width: 10px; } .sidehead svg { width: 9px; height: 9px; }
.tree { width: 349px; flex: 1; background: #fff; border: 1px solid #82828f; font: 12px/18px var(--tree); font-feature-settings: normal; color: #0000f0; }
.tree li { display: flex; align-items: center; height: 21px; gap: 5px; white-space: nowrap; }
.tree li:nth-child(3n) { height: 20px; }
.tree li:nth-child(1) { height: 21px; }
.tree li:nth-child(2) { height: 22px; }
.tree li:nth-child(3), .tree li:nth-child(4) { height: 23px; }
.tree li.black { color: #111; } .tree li.bold { font-weight: bold; }
.arr { width: 8px; } .arr svg { width: 8px; height: 8px; }
input[type=checkbox] { appearance: none; width: 13px; height: 13px; border: 1px solid #777; background: #f4f4f4; box-shadow: inset 0 0 0 1px #fff; display: grid; place-items: center; flex: none; }
input[type=checkbox]:checked::before { content: ""; width: 4px; height: 8px; border: solid #3a4f94; border-width: 0 2px 2px 0; transform: rotate(38deg) translate(-1px, 0); }

.right { flex: 1; min-width: 0; display: flex; flex-direction: column; padding: 3px 1px 0 0; }
.view { position: relative; height: 418px; background: linear-gradient(#fff 0, #fbfcfd 12%, #dfe7f1 40%, #afc3de); overflow: hidden; }
.lbl { font: 13px var(--ui); fill: #1c1c1c; }
.scale { position: absolute; left: 6px; top: 8px; color: #1c1c1c; font-size: 12px; }
.scaletitle { line-height: 16px; font-size: 13px; }
.scalebody { display: flex; padding-top: 7px; }
.ramp { width: 25px; height: 152px; border: 1px solid #222; background: linear-gradient(#f00, #ff9000 20%, #ff0 36%, #00f000 50%, #0ff 66%, #0070ff 88%, #00f); }
.ticks { width: 5px; height: 152px; background: repeating-linear-gradient(#333 0 1px, transparent 1px 7px, #333 7px 8px, transparent 8px 15px); }
.scalebody ul { margin: -7px 0 0 5px; font-size: 13px; }
.scalebody li { line-height: 15px; height: 15px; }
.cube { position: absolute; right: 6px; top: 10px; width: 46px; height: 46px; }
.nav { position: absolute; right: 0; top: 72px; width: 33px; height: 225px; }

.outwrap { position: relative; margin-top: 5px; padding-right: 4px; }
.outbtn { display: block; width: 100%; height: 20px; border: 1px solid #707070; border-radius: 2px; background: linear-gradient(#f4f4f4, #e8e8e8 48%, #d4d4d4 52%, #cfcfcf); font-size: 11px; color: #111; }
.output { display: flex; background: #fff; border: 1px solid #82828f; margin-top: 1px; height: 243px; padding: 5px 6px 0 5px; gap: 8px; font-size: 11px; line-height: 14px; color: #111; }
.plotcol { flex: 1; display: flex; flex-direction: column; }
.ptabs { display: flex; height: 13px; padding-left: 1px; }
.pt, .bt { position: relative; height: 14px; line-height: 14px; font-size: 11px; color: #111; }
.pt { width: 54px; } .pt + .pt { width: 58px; }
.pt svg, .bt svg { position: absolute; inset: 0; width: 100%; height: 100%; }
.pt path, .bt path { fill: #f0f0f0; stroke: #444; vector-effect: non-scaling-stroke; }
.pt.on path, .bt.on path { fill: #fff; }
.pt span, .bt span { position: relative; }
.frame { position: relative; display: flex; height: 191px; border: 1px solid #82828f; padding: 3px 4px 4px 51px; }
.plot { flex: 1; display: flex; flex-direction: column; padding-top: 1px; }
.ptitle { line-height: 12px; text-align: center; }
.axes { height: 152px; border: solid #111; border-width: 0 0 2px 2px; padding-top: 73px; }
.flat { display: block; height: 3px; background: linear-gradient(#808000 0 2px, #c0c0c0 2px 3px); }
.xt { display: flex; justify-content: space-between; margin-right: -3px; padding-top: 2px; }
.legend { width: 69px; margin-left: 17px; }
.legend li { display: flex; align-items: center; justify-content: space-between; height: 16px; white-space: nowrap; }
.legend i { width: 26px; height: 2px; }
.range { display: flex; align-items: center; padding-top: 6px; gap: 4px; }
.range input { width: 125px; height: 19px; border: 1px solid #b4bccb; border-top-color: #8a93a5; padding: 0 4px; border-radius: 1px; background: #fff; }
.opts { width: 108px; display: flex; flex-direction: column; gap: 4px; }
.sel3 select { appearance: none; display: block; width: 100%; height: 20px; border: 1px solid #777; border-radius: 3px; background: linear-gradient(#f4f4f4, #e8e8e8 48%, #d6d6d6 52%, #cecece); padding: 0 2px; }
.sel3::after { right: 5px; top: 8px; }
.log { display: flex; align-items: center; gap: 4px; color: #888; height: 14px; }
.log input { border-color: #b5b5b5; }
.savebtn { margin-top: 90px; height: 21px; border: 1px solid #707070; border-radius: 3px; background: linear-gradient(#f4f4f4, #e8e8e8 48%, #d6d6d6 52%, #cecece); }
.hb { align-self: center; margin-top: 5px; }
.btabs { display: flex; margin-top: -1px; }
.bt.w104 { width: 104px; } .bt.w76 { width: 77px; }
.status { height: 28px; display: flex; justify-content: flex-end; align-items: flex-end; gap: 6px; padding-right: 3px; }
.ssep { width: 1px; height: 25px; background: #c8c8c8; }
.status svg { width: 10px; height: 10px; }
</style>
